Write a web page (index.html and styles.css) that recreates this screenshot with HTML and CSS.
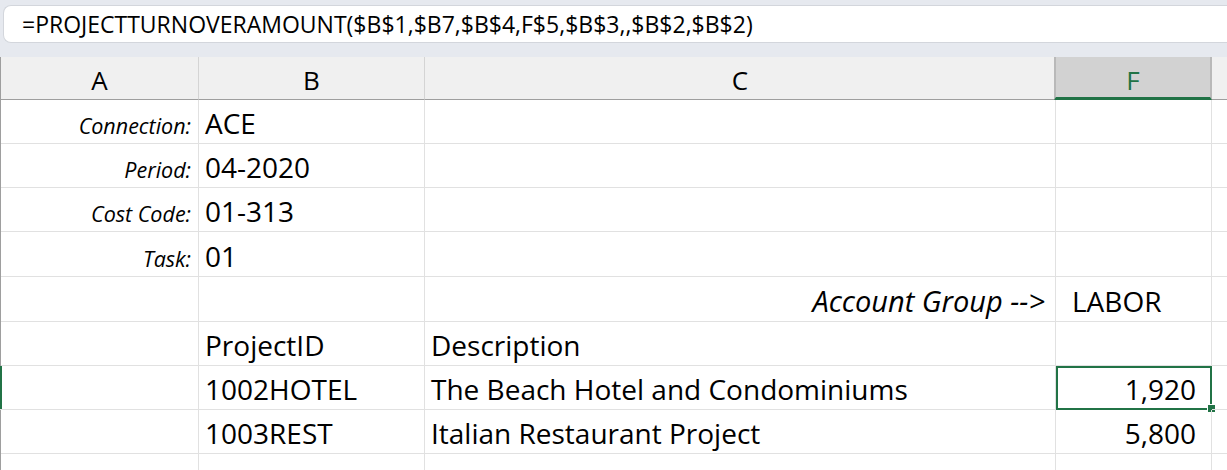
FILE: index.html
```html
<!DOCTYPE html>
<html>
<head>
<meta charset="utf-8">
<link rel="stylesheet" href="styles.css">
</head>
<body>
<div class="topbar">
  <div class="formula">=PROJECTTURNOVERAMOUNT($B$1,$B7,$B$4,F$5,$B$3,,$B$2,$B$2)</div>
</div>
<div class="sheet">
  <div class="hdr">A</div>
  <div class="hdr">B</div>
  <div class="hdr">C</div>
  <div class="hdr hdr-sel">F</div>
  <div class="hdr hdr-rest"></div>

  <div class="cell label">Connection:</div>
  <div class="cell">ACE</div>
  <div class="cell"></div>
  <div class="cell"></div>
  <div class="cell"></div>

  <div class="cell label">Period:</div>
  <div class="cell">04-2020</div>
  <div class="cell"></div>
  <div class="cell"></div>
  <div class="cell"></div>

  <div class="cell label">Cost Code:</div>
  <div class="cell">01-313</div>
  <div class="cell"></div>
  <div class="cell"></div>
  <div class="cell"></div>

  <div class="cell label">Task:</div>
  <div class="cell">01</div>
  <div class="cell"></div>
  <div class="cell"></div>
  <div class="cell"></div>

  <div class="cell"></div>
  <div class="cell"></div>
  <div class="cell ital right">Account Group --&gt;</div>
  <div class="cell lab">LABOR</div>
  <div class="cell"></div>

  <div class="cell"></div>
  <div class="cell">ProjectID</div>
  <div class="cell">Description</div>
  <div class="cell"></div>
  <div class="cell"></div>

  <div class="cell row-sel"></div>
  <div class="cell">1002HOTEL</div>
  <div class="cell">The Beach Hotel and Condominiums</div>
  <div class="cell num selected">1,920<span class="handle"></span></div>
  <div class="cell"></div>

  <div class="cell"></div>
  <div class="cell">1003REST</div>
  <div class="cell">Italian Restaurant Project</div>
  <div class="cell num">5,800</div>
  <div class="cell"></div>

  <div class="cell"></div>
  <div class="cell"></div>
  <div class="cell"></div>
  <div class="cell"></div>
  <div class="cell"></div>
</div>
</body>
</html>
```

FILE: styles.css
```css
html, body {
  margin: 0;
  padding: 0;
  background: #ffffff;
  overflow: hidden;
  width: 1227px;
  height: 470px;
}
body {
  font-family: "Open Sans", "Liberation Sans", sans-serif;
  color: #000;
}
.topbar {
  height: 57px;
  background: #e6e9ef;
  box-sizing: border-box;
  padding: 5px 0 0 3px;
}
.formula {
  height: 38px;
  box-sizing: border-box;
  background: #fff;
  border: 1px solid #d3d6dc;
  border-right: none;
  border-radius: 8px 0 0 8px;
  padding: 1px 0 0 18px;
  font-size: 23px;
  line-height: 35px;
  white-space: nowrap;
}
.sheet {
  display: grid;
  grid-template-columns: 198px 226px 631px 156px 16px;
  grid-template-rows: 43px 44px 44px 44px 45px 45px 44px 44px 44px 17px;
  border-left: 1px solid #9e9e9e;
}
.hdr {
  background: #f0f0f0;
  border-right: 1px solid #d4d4d4;
  border-bottom: 1px solid #9e9e9e;
  box-sizing: border-box;
  display: flex;
  align-items: center;
  justify-content: center;
  font-size: 26px;
  line-height: 34px;
  padding-top: 3px;
}
.hdr-sel {
  background: #d2d2d2;
  color: #217346;
  border-left: 2px solid #b9b9b9;
  border-right: 2px solid #b9b9b9;
  border-bottom: 3px solid #217346;
  margin-left: -2px;
  padding-top: 5px;
}
.hdr-rest {
  border-right: none;
}
.cell {
  box-sizing: border-box;
  border-right: 1px solid #e1e1e1;
  border-bottom: 1px solid #e1e1e1;
  font-size: 28px;
  line-height: 30px;
  padding: 0 6px 5px 6px;
  display: flex;
  align-items: flex-end;
  white-space: nowrap;
  position: relative;
}
.label {
  justify-content: flex-end;
  font-style: italic;
  font-size: 21.5px;
  line-height: 24px;
  padding-right: 7px;
  padding-bottom: 5px;
}
.ital {
  font-style: italic;
  font-size: 29px;
}
.right {
  justify-content: flex-end;
  padding-right: 10px;
}
.lab {
  padding-left: 16px;
}
.num {
  justify-content: flex-end;
  padding-right: 15px;
}
.row-sel {
  box-shadow: inset 2px 0 0 #217346;
  margin-left: -1px;
}
.selected {
  outline: 2px solid #217346;
  outline-offset: -2px;
}
.handle {
  position: absolute;
  right: -5px;
  bottom: -4px;
  width: 7px;
  height: 7px;
  background: #217346;
  border: 1px solid #fff;
}
```
